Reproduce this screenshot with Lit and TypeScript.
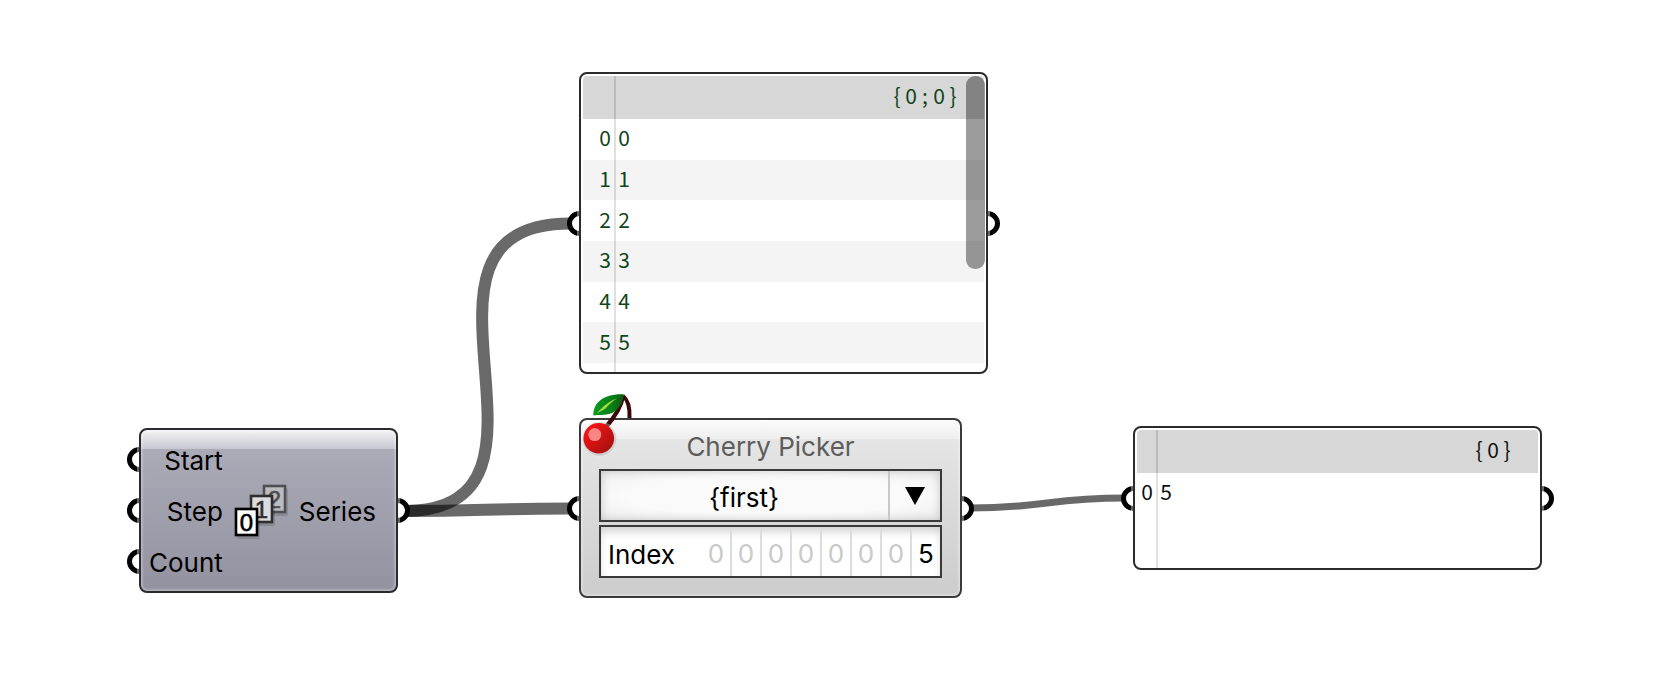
import { LitElement, html, css, svg } from "lit";
import { customElement, property, state } from "lit/decorators.js";
import { classMap } from "lit/directives/class-map.js";

@customElement("graph-ports")
class GraphPorts extends LitElement {
  @property({ type: Number }) count = 1;
  static styles = css`
    :host {
      position: absolute;
      top: 0;
      bottom: 0;
      width: 25px;
      display: flex;
      flex-direction: column;
      justify-content: center;
      gap: 26px;
    }
    :host([side="in"]) { left: -12px; }
    :host([side="out"]) { right: -12px; }
    .port {
      box-sizing: border-box;
      width: 25px;
      height: 25px;
      border: 5px solid #000;
      border-radius: 50%;
      background: #fff;
    }
  `;
  render() {
    return Array.from({ length: this.count }, () => html`<div class="port"></div>`);
  }
}

/* Every character sits in a cell of the same pitch. */
const fixed = (text: string) => [...text].map((c) => html`<span class="cell">${c}</span>`);

@customElement("data-panel")
class DataPanel extends LitElement {
  @property() path = "";
  @property({ attribute: false }) items: string[] = [];
  @property({ type: Boolean }) scroll = false;
  static styles = css`
    :host {
      display: block;
      box-sizing: border-box;
      position: relative;
      height: 100%;
      padding: 2px;
      border: 2px solid #2b2b2e;
      border-radius: 8px;
      background: #fff;
      box-shadow: 0 0 0 2px rgba(255, 255, 255, 0.4);
      overflow: hidden;
      color: #111;
      font: 400 21px "Noto Sans CJK JP", "Liberation Mono", monospace;
    }
    :host([scroll]) { color: #0f4519; }
    table {
      width: 100%;
      border-collapse: collapse;
      line-height: 28px;
    }
    .tall { height: 287px; }
    th, td { padding: 0; font-weight: inherit; }
    .head { height: 43px; background: #d7d7d7; }
    .path { padding: 0 24px 6px 0; text-align: right; border-radius: 4px 4px 0 0; }
    .line { height: 40px; }
    .tall .line { height: auto; }
    .line:nth-child(even) { background: #f4f4f4; }
    .index { width: 14px; padding: 0 5px 4px 3px; text-align: right; }
    .tall .index { padding-left: 15px; }
    .value { padding-bottom: 4px; text-align: left; }
    .cell {
      display: inline-block;
      width: 14px;
      text-align: center;
    }
    .rule {
      position: absolute;
      top: 2px;
      bottom: 0;
      left: 21px;
      width: 2px;
      background: rgba(0, 0, 0, 0.12);
    }
    .rule.wide { left: 33px; }
    .thumb {
      position: absolute;
      top: 2px;
      right: 1px;
      width: 19px;
      height: 193px;
      border-radius: 9px;
      background: rgba(0, 0, 0, 0.39);
    }
  `;
  render() {
    return html`
      <table class=${classMap({ tall: this.scroll })}>
        <thead>
          <tr class="head"><th class="path" colspan="2">${fixed(this.path)}</th></tr>
        </thead>
        <tbody>
          ${this.items.map(
            (v, i) => html`<tr class="line">
              <td class="index">${fixed(String(i))}</td><td class="value">${fixed(v)}</td>
            </tr>`
          )}
        </tbody>
      </table>
      <div class=${classMap({ rule: true, wide: this.scroll })}></div>
      ${this.scroll ? html`<div class="thumb"></div>` : ""}
    `;
  }
}

@customElement("series-node")
class SeriesNode extends LitElement {
  static styles = css`
    :host {
      display: flex;
      align-items: center;
      gap: 11px;
      box-sizing: border-box;
      height: 100%;
      padding: 4px 22px 4px 8px;
      border: 2px solid #2b2b2e;
      border-radius: 8px;
      background:
        linear-gradient(#f4f4f6, #c6c6cf) 0 0 / 100% 19px no-repeat,
        linear-gradient(#aeaebb, #9292a0);
      box-shadow: 0 0 0 2px rgba(255, 255, 255, 0.4),
        inset 0 0 3px 1px rgba(255, 255, 255, 0.45);
      font: 26px Inter, sans-serif;
      color: #000;
    }
    .inputs { flex: 1; padding-top: 2px; text-align: right; line-height: 51px; }
    .icon { display: block; flex: none; width: 54px; height: 54px; overflow: visible; }
    .glyph { font: 24px "Liberation Sans", sans-serif; text-anchor: middle; }
    .output { padding-top: 2px; line-height: 51px; }
  `;
  render() {
    const card = (x: number, y: number, n: string, fill: string, ink: string) => svg`
      <rect x=${x + 2} y=${y + 3} width="23" height="28" rx="2" fill="#000" opacity=".13"></rect>
      <rect x=${x + 1} y=${y + 1} width="21" height="26" fill=${fill} stroke=${ink} stroke-width="2.6"></rect>
      <text class="glyph" x=${x + 11.5} y=${y + 22.5} fill=${ink} stroke=${ink} stroke-width=".6">${n}</text>`;
    return html`
      <div class="inputs"><div>Start</div><div>Step</div><div>Count</div></div>
      <svg class="icon" viewBox="0 0 54 54" aria-hidden="true">
        ${card(29, 1, "2", "#bcbcbe", "#505054")}
        ${card(16, 11, "1", "#dcdcdd", "#2e2e30")}
        ${card(1, 24, "0", "#fff", "#000")}
      </svg>
      <div class="output">Series</div>
    `;
  }
}

@customElement("cherry-picker")
class CherryPicker extends LitElement {
  @state() private digits = "00000005".split("");
  static styles = css`
    :host {
      display: block;
      box-sizing: border-box;
      height: 100%;
      padding: 0 18px;
      border: 2px solid #3b3b3b;
      border-radius: 8px;
      background:
        linear-gradient(#fcfcfc, #eeeeee) 0 0 / 100% 19px no-repeat,
        linear-gradient(#e8e8e8, #cccccc);
      box-shadow: 0 0 0 2px rgba(255, 255, 255, 0.4),
        inset 0 0 3px 1px rgba(255, 255, 255, 0.5);
      font: 26px Inter, sans-serif;
      color: #000;
    }
    .title {
      margin: 0;
      height: 49px;
      line-height: 54px;
      text-align: center;
      font-size: 26px;
      font-weight: 400;
      color: #5c5c5c;
    }
    .field {
      position: relative;
      display: flex;
      align-items: stretch;
      box-sizing: border-box;
      height: 53px;
      margin-bottom: 3px;
      border: 2px solid #3a3a3a;
      box-shadow: 0 0 0 1px rgba(255, 255, 255, 0.3);
    }
    .menu { background: radial-gradient(ellipse at center, #fafafa 60%, #ededed); box-shadow: inset 0 0 10px rgba(0, 0, 0, 0.18); }
    .number { background: #fff; box-shadow: inset 0 6px 10px -2px rgba(0, 0, 0, 0.2); }
    select, input {
      appearance: none;
      margin: 0;
      border: 0;
      border-radius: 0;
      outline: 0;
      background: transparent;
      font: inherit;
      color: inherit;
      text-align: center;
    }
    select { flex: 1; width: 100%; padding: 3px 53px 0 0; text-align-last: center; }
    .arrow {
      position: absolute;
      top: 0;
      right: 0;
      bottom: 0;
      width: 50px;
      display: grid;
      place-items: center;
      border-left: 2px solid #c8c8c8;
      pointer-events: none;
    }
    .label { flex: 1; padding: 3px 0 0 7px; line-height: 49px; }
    .digits { display: flex; }
    .digit {
      box-sizing: border-box;
      width: 30px;
      padding: 4px 0 0;
      border-left: 2px solid #dcdcdc;
      color: #c9c9c9;
    }
    .digit:first-child { border-left-color: transparent; }
    .digit.set { color: #000; }
    .cherry { position: absolute; left: 0; top: -27px; width: 60px; height: 70px; }
  `;
  render() {
    const lead = this.digits.findIndex((d) => d !== "0");
    return html`
      <h2 class="title">Cherry Picker</h2>
      <div class="field menu">
        <select aria-label="Pattern"><option>{first}</option></select>
        <span class="arrow" aria-hidden="true">
          <svg width="20" height="18" viewBox="0 0 20 18"><path d="M0 0H20L10 18Z"></path></svg>
        </span>
      </div>
      <div class="field number">
        <label class="label" for="units">Index</label>
        <div class="digits">
          ${this.digits.map(
            (d, i) => html`<input
              class=${classMap({ digit: true, set: lead >= 0 && i >= lead })}
              id=${i === this.digits.length - 1 ? "units" : `digit${i}`}
              aria-label=${`Index digit ${i + 1}`}
              maxlength="1"
              .value=${d}
              @change=${(e: Event) => {
                const v = (e.target as HTMLInputElement).value || "0";
                this.digits = this.digits.map((o, j) => (j === i ? v : o));
              }}
            />`
          )}
        </div>
      </div>
      <svg class="cherry" viewBox="0 0 60 70" aria-hidden="true">
        <defs>
          <linearGradient id="fruit" x1="0" y1="0" x2="1" y2="1">
            <stop offset=".2" stop-color="#f01414"></stop><stop offset="1" stop-color="#9c1010"></stop>
          </linearGradient>
          <linearGradient id="leaf" x1="0" y1="0" x2="1" y2="0">
            <stop offset="0" stop-color="#0b9a22"></stop><stop offset=".6" stop-color="#078018"></stop><stop offset="1" stop-color="#0a5512"></stop>
          </linearGradient>
        </defs>
        <path d="M44 5C49 9 51 17 50.5 27" fill="none" stroke="#3d0608" stroke-width="4"></path>
        <path d="M44 5C42 17 36 26 26 37" fill="none" stroke="#3d0608" stroke-width="4.4"></path>
        <circle cx="20.5" cy="48" r="17.5" fill="#fff" opacity=".35"></circle>
        <circle cx="20.5" cy="48" r="17" fill="#000" opacity=".12"></circle>
        <circle cx="19.8" cy="47.2" r="15.3" fill="url(#fruit)"></circle>
        <circle cx="15.8" cy="43.6" r="6.5" fill="#ff9a9a" opacity=".85"></circle>
        <path d="M14.4 24.5C14 13 23 2.6 45 3.4C43 15 37 21.5 30 23C24 24.3 20 23.6 14.4 24.5Z" fill="url(#leaf)"></path>
        <path d="M17.5 22C23 18 25 12.5 38 7.3C32.5 11 29.5 14.5 26.5 17.4C23 19.6 20.5 21 17.5 22Z" fill="#a5d93c"></path>
      </svg>
    `;
  }
}

@customElement("app-root")
class AppRoot extends LitElement {
  static styles = css`
    :host {
      display: block;
      position: relative;
      min-height: 100vh;
      overflow: hidden;
      background: #fff;
    }
    .wires {
      position: absolute;
      inset: 0;
      width: 100%;
      height: 100%;
      fill: none;
      stroke: rgba(0, 0, 0, 0.59);
    }
    .list { stroke-width: 12px; }
    .item { stroke-width: 7px; }
    .node { position: absolute; }
    .series { left: 139px; top: 428px; width: 259px; height: 165px; }
    .values { left: 579px; top: 72px; width: 409px; height: 302px; }
    .picker { left: 579px; top: 418px; width: 383px; height: 180px; }
    .result { left: 1133px; top: 426px; width: 409px; height: 144px; }
    .body { position: relative; height: 100%; }
  `;
  render() {
    return html`
      <svg class="wires" aria-hidden="true">
        <path class="list" d="M404 511C590 511 378 223.5 570 223.5"></path>
        <path class="list" d="M404 511C485 511 485 508.5 570 508.5"></path>
        <path class="item" d="M970 508C1047 508 1047 498 1125 498"></path>
      </svg>
      <section class="node series">
        <graph-ports side="in" count="3"></graph-ports>
        <graph-ports side="out"></graph-ports>
        <div class="body"><series-node></series-node></div>
      </section>
      <section class="node values">
        <graph-ports side="in"></graph-ports>
        <graph-ports side="out"></graph-ports>
        <div class="body"><data-panel scroll path="{0;0}" .items=${["0", "1", "2", "3", "4", "5"]}></data-panel></div>
      </section>
      <section class="node picker">
        <graph-ports side="in"></graph-ports>
        <graph-ports side="out"></graph-ports>
        <div class="body"><cherry-picker></cherry-picker></div>
      </section>
      <section class="node result">
        <graph-ports side="in"></graph-ports>
        <graph-ports side="out"></graph-ports>
        <div class="body"><data-panel path="{0}" .items=${["5"]}></data-panel></div>
      </section>
    `;
  }
}
